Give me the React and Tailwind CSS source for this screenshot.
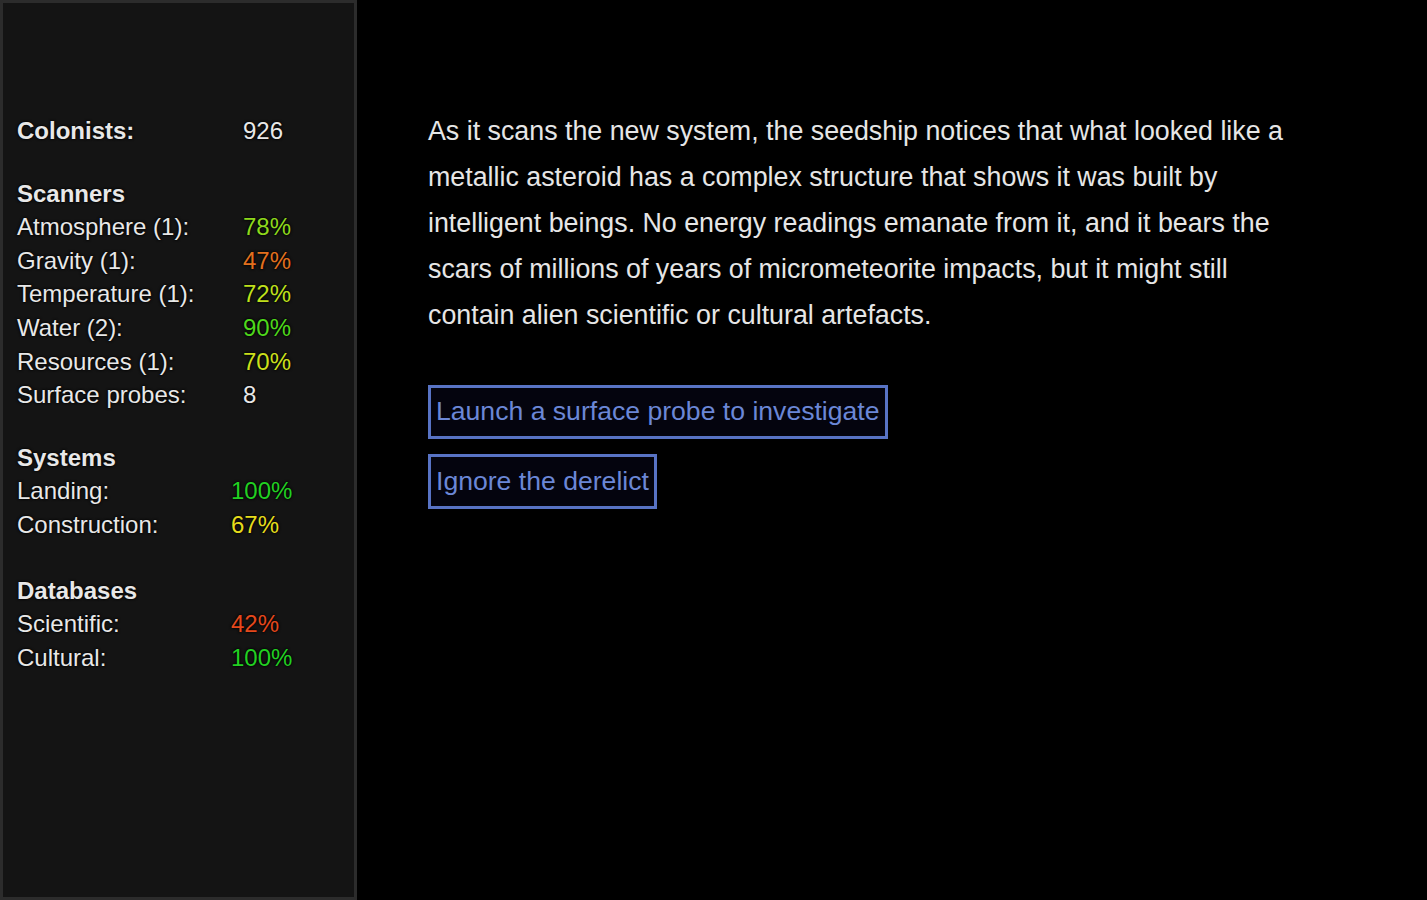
const SECTIONS = [
  {
    title: 'Scanners',
    gap: 'mt-[29px]',
    col: 'grid-cols-[226px_1fr]',
    rows: [
      ['Atmosphere (1):', '78%', 'text-[#8ed81c]'],
      ['Gravity (1):', '47%', 'text-[#e2701e]'],
      ['Temperature (1):', '72%', 'text-[#bfe01c]'],
      ['Water (2):', '90%', 'text-[#4fd81c]'],
      ['Resources (1):', '70%', 'text-[#cde01c]'],
      ['Surface probes:', '8', 'text-[#e8e8e8]'],
    ],
  },
  {
    title: 'Systems',
    gap: 'mt-[29px]',
    col: 'grid-cols-[214px_1fr]',
    rows: [
      ['Landing:', '100%', 'text-[#22d022]'],
      ['Construction:', '67%', 'text-[#e6dc1c]'],
    ],
  },
  {
    title: 'Databases',
    gap: 'mt-[32px]',
    col: 'grid-cols-[214px_1fr]',
    rows: [
      ['Scientific:', '42%', 'text-[#e4481c]'],
      ['Cultural:', '100%', 'text-[#22d022]'],
    ],
  },
];

function Sidebar() {
  return (
    <aside className="w-[357px] shrink-0 h-[900px] bg-[#141414] border-[3px] border-[#2c2c2c] pl-[14px] pt-[111px] text-[24px] leading-[33.6px] text-[#e8e8e8] [text-shadow:0_0_3px_#000,0_0_2px_#000]">
      <div className="grid grid-cols-[226px_1fr]">
        <span className="font-bold">Colonists:</span>
        <span>926</span>
      </div>

      {SECTIONS.map((s) => (
        <div key={s.title} className={s.gap}>
          <div className="font-bold">{s.title}</div>
          {s.rows.map(([label, value, color]) => (
            <div key={label} className={`grid ${s.col}`}>
              <span>{label}</span>
              <span className={color}>{value}</span>
            </div>
          ))}
        </div>
      ))}
    </aside>
  );
}

export default function App() {
  return (
    <div className="w-[1427px] h-[900px] bg-black flex overflow-hidden font-['Liberation_Sans',Arial,sans-serif]">
      <Sidebar />
      <main className="pl-[71px] pt-[108px]">
        <p className="w-[880px] text-[26.8px] leading-[46px] text-[#e6e6e6]">
          As it scans the new system, the seedship notices that what looked like a metallic asteroid has a complex structure that shows it was built by intelligent beings. No energy readings emanate from it, and it bears the scars of millions of years of micrometeorite impacts, but it might still contain alien scientific or cultural artefacts.
        </p>
        <div className="mt-[47px] flex flex-col items-start gap-[15px]">
          <button className="border-[3px] border-[#5873c4] bg-[#04040e] px-[5px] h-[54px] text-[26.6px] text-[#6b87d6]">
            Launch a surface probe to investigate
          </button>
          <button className="border-[3px] border-[#5873c4] bg-[#04040e] px-[5px] h-[55px] text-[26.6px] text-[#6b87d6]">
            Ignore the derelict
          </button>
        </div>
      </main>
    </div>
  );
}
